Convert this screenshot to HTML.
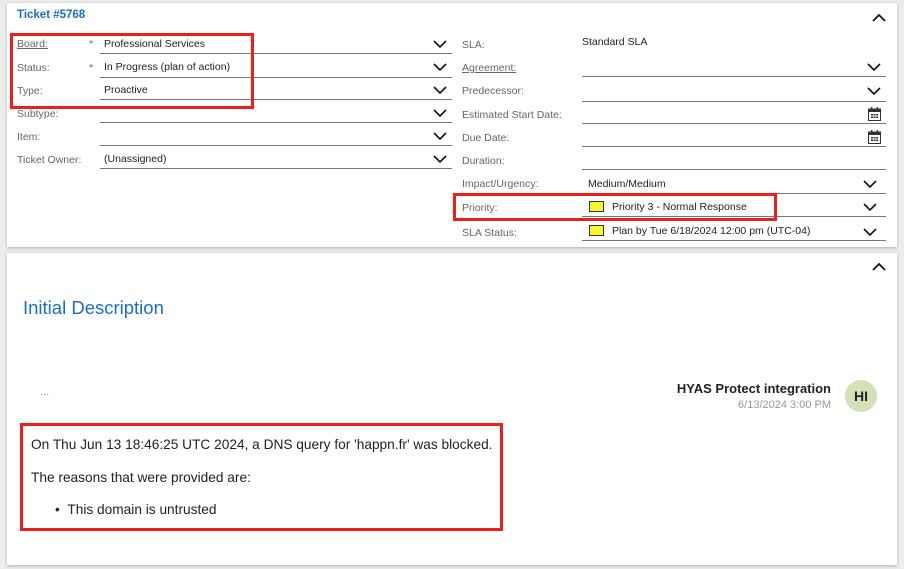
<!DOCTYPE html>
<html><head><meta charset="utf-8"><style>
*{box-sizing:border-box;margin:0;padding:0}
body{width:904px;height:569px;background:#ececec;font-family:"Liberation Sans",sans-serif;position:relative;overflow:hidden;color:#222}
.card{position:absolute;background:#fff;box-shadow:0 1px 3px rgba(0,0,0,.25)}
.a{position:absolute;white-space:nowrap}
.lbl{font-size:10.5px;color:#666}
.val{font-size:10.5px;color:#222}
.ul{position:absolute;height:1px;background:#777}
.chev{position:absolute;width:14px;height:8px}
.red{position:absolute;border:3px solid #f01d1d}
.sq{position:absolute;width:15px;height:11px;background:#f7f72a;border:1px solid #333}
.cal{position:absolute;width:13px;height:14px}
</style></head><body>
<div class="card" style="left:7px;top:3px;width:890px;height:244px"></div>
<div class="card" style="left:7px;top:253px;width:890px;height:312px"></div>

<div class="a" style="left:17px;top:9px;font-size:11.5px;color:#1a6dc8;font-weight:bold">Ticket #5768</div>
<svg class="a" style="left:871px;top:13px" width="16" height="10"><path d="M2 8 L8 2 L14 8" fill="none" stroke="#111" stroke-width="1.8"/></svg>

<div class="a lbl" style="left:17px;top:38px;text-decoration:underline">Board:</div>
<div class="a lbl" style="left:89px;top:38px">*</div>
<div class="a val" style="left:104px;top:38px">Professional Services</div>
<div class="ul" style="left:100px;top:53px;width:352px"></div>
<div class="a lbl" style="left:17px;top:62px">Status:</div>
<div class="a lbl" style="left:89px;top:62px">*</div>
<div class="a val" style="left:104px;top:61px">In Progress (plan of action)</div>
<div class="ul" style="left:100px;top:77px;width:352px"></div>
<div class="a lbl" style="left:17px;top:85px">Type:</div>
<div class="a val" style="left:104px;top:84px">Proactive</div>
<div class="ul" style="left:100px;top:99px;width:352px"></div>
<div class="a lbl" style="left:17px;top:108px">Subtype:</div>
<div class="ul" style="left:100px;top:122px;width:352px"></div>
<div class="a lbl" style="left:17px;top:131px">Item:</div>
<div class="ul" style="left:100px;top:145px;width:352px"></div>
<div class="a lbl" style="left:17px;top:154px">Ticket Owner:</div>
<div class="a val" style="left:104px;top:153px">(Unassigned)</div>
<div class="ul" style="left:100px;top:168px;width:352px"></div>

<svg class="chev" style="left:433px;top:40px" viewBox="0 0 14 8"><path d="M1 1 L7 7 L13 1" fill="none" stroke="#111" stroke-width="1.6"/></svg>
<svg class="chev" style="left:433px;top:63px" viewBox="0 0 14 8"><path d="M1 1 L7 7 L13 1" fill="none" stroke="#111" stroke-width="1.6"/></svg>
<svg class="chev" style="left:433px;top:86px" viewBox="0 0 14 8"><path d="M1 1 L7 7 L13 1" fill="none" stroke="#111" stroke-width="1.6"/></svg>
<svg class="chev" style="left:433px;top:109px" viewBox="0 0 14 8"><path d="M1 1 L7 7 L13 1" fill="none" stroke="#111" stroke-width="1.6"/></svg>
<svg class="chev" style="left:433px;top:132px" viewBox="0 0 14 8"><path d="M1 1 L7 7 L13 1" fill="none" stroke="#111" stroke-width="1.6"/></svg>
<svg class="chev" style="left:433px;top:155px" viewBox="0 0 14 8"><path d="M1 1 L7 7 L13 1" fill="none" stroke="#111" stroke-width="1.6"/></svg>

<div class="red" style="left:10px;top:33px;width:244px;height:76px"></div>

<div class="a lbl" style="left:462px;top:39px">SLA:</div>
<div class="a val" style="left:582px;top:36px">Standard SLA</div>
<div class="a lbl" style="left:462px;top:62px;text-decoration:underline">Agreement:</div>
<div class="ul" style="left:582px;top:76px;width:304px"></div>
<div class="a lbl" style="left:462px;top:85px">Predecessor:</div>
<div class="ul" style="left:582px;top:101px;width:304px"></div>
<div class="a lbl" style="left:462px;top:109px">Estimated Start Date:</div>
<div class="ul" style="left:582px;top:123px;width:304px"></div>
<div class="a lbl" style="left:462px;top:132px">Due Date:</div>
<div class="ul" style="left:582px;top:146px;width:304px"></div>
<div class="a lbl" style="left:462px;top:155px">Duration:</div>
<div class="ul" style="left:582px;top:169px;width:304px"></div>
<div class="a lbl" style="left:462px;top:178px">Impact/Urgency:</div>
<div class="a val" style="left:588px;top:178px">Medium/Medium</div>
<div class="ul" style="left:582px;top:193px;width:304px"></div>
<div class="a lbl" style="left:462px;top:202px">Priority:</div>
<div class="sq" style="left:589px;top:201px"></div>
<div class="a val" style="left:612px;top:201px">Priority 3 - Normal Response</div>
<div class="ul" style="left:582px;top:216px;width:304px"></div>
<div class="a lbl" style="left:462px;top:227px">SLA Status:</div>
<div class="sq" style="left:589px;top:225px"></div>
<div class="a val" style="left:612px;top:225px">Plan by Tue 6/18/2024 12:00 pm (UTC-04)</div>
<div class="ul" style="left:582px;top:240px;width:304px"></div>

<svg class="chev" style="left:867px;top:63px" viewBox="0 0 14 8"><path d="M1 1 L7 7 L13 1" fill="none" stroke="#111" stroke-width="1.6"/></svg>
<svg class="chev" style="left:867px;top:87px" viewBox="0 0 14 8"><path d="M1 1 L7 7 L13 1" fill="none" stroke="#111" stroke-width="1.6"/></svg>
<svg class="chev" style="left:863px;top:180px" viewBox="0 0 14 8"><path d="M1 1 L7 7 L13 1" fill="none" stroke="#111" stroke-width="1.6"/></svg>
<svg class="chev" style="left:863px;top:203px" viewBox="0 0 14 8"><path d="M1 1 L7 7 L13 1" fill="none" stroke="#111" stroke-width="1.6"/></svg>
<svg class="chev" style="left:863px;top:228px" viewBox="0 0 14 8"><path d="M1 1 L7 7 L13 1" fill="none" stroke="#111" stroke-width="1.6"/></svg>

<svg class="cal" style="left:868px;top:107px" viewBox="0 0 13 14"><rect x="0.5" y="2" width="12" height="11.5" fill="#fff" stroke="#333"/><rect x="0.5" y="2" width="12" height="3" fill="#333"/><rect x="3" y="0" width="1.3" height="3" fill="#333"/><rect x="8.7" y="0" width="1.3" height="3" fill="#333"/><g fill="#333"><rect x="3" y="7" width="2" height="1.5"/><rect x="5.6" y="7" width="2" height="1.5"/><rect x="8.2" y="7" width="2" height="1.5"/><rect x="3" y="9.5" width="2" height="1.5"/><rect x="5.6" y="9.5" width="2" height="1.5"/><rect x="8.2" y="9.5" width="2" height="1.5"/></g></svg>
<svg class="cal" style="left:868px;top:130px" viewBox="0 0 13 14"><rect x="0.5" y="2" width="12" height="11.5" fill="#fff" stroke="#333"/><rect x="0.5" y="2" width="12" height="3" fill="#333"/><rect x="3" y="0" width="1.3" height="3" fill="#333"/><rect x="8.7" y="0" width="1.3" height="3" fill="#333"/><g fill="#333"><rect x="3" y="7" width="2" height="1.5"/><rect x="5.6" y="7" width="2" height="1.5"/><rect x="8.2" y="7" width="2" height="1.5"/><rect x="3" y="9.5" width="2" height="1.5"/><rect x="5.6" y="9.5" width="2" height="1.5"/><rect x="8.2" y="9.5" width="2" height="1.5"/></g></svg>

<div class="red" style="left:453px;top:193px;width:324px;height:28px"></div>

<svg class="a" style="left:871px;top:262px" width="16" height="10"><path d="M2 8 L8 2 L14 8" fill="none" stroke="#111" stroke-width="1.8"/></svg>
<div class="a" style="left:23px;top:297px;font-size:18.5px;color:#1a6dc8">Initial Description</div>
<div class="a" style="left:40px;top:386px;font-size:11px;color:#999">...</div>
<div class="a" style="right:73px;top:381px;font-size:13px;font-weight:bold;color:#222">HYAS Protect integration</div>
<div class="a" style="right:73px;top:399px;font-size:11px;color:#999">6/13/2024 3:00 PM</div>
<div class="a" style="left:845px;top:380px;width:32px;height:32px;border-radius:50%;background:#d3e0b8;font-size:14px;font-weight:bold;color:#222;text-align:center;line-height:32px">HI</div>

<div class="a" style="left:31px;top:437px;font-size:13.7px;color:#222">On Thu Jun 13 18:46:25 UTC 2024, a DNS query for 'happn.fr' was blocked.</div>
<div class="a" style="left:31px;top:470px;font-size:13.7px;color:#222">The reasons that were provided are:</div>
<div class="a" style="left:55px;top:502px;font-size:13.7px;color:#222">•&nbsp;&nbsp;This domain is untrusted</div>
<div class="red" style="left:20px;top:423px;width:483px;height:108px"></div>
</body></html>
